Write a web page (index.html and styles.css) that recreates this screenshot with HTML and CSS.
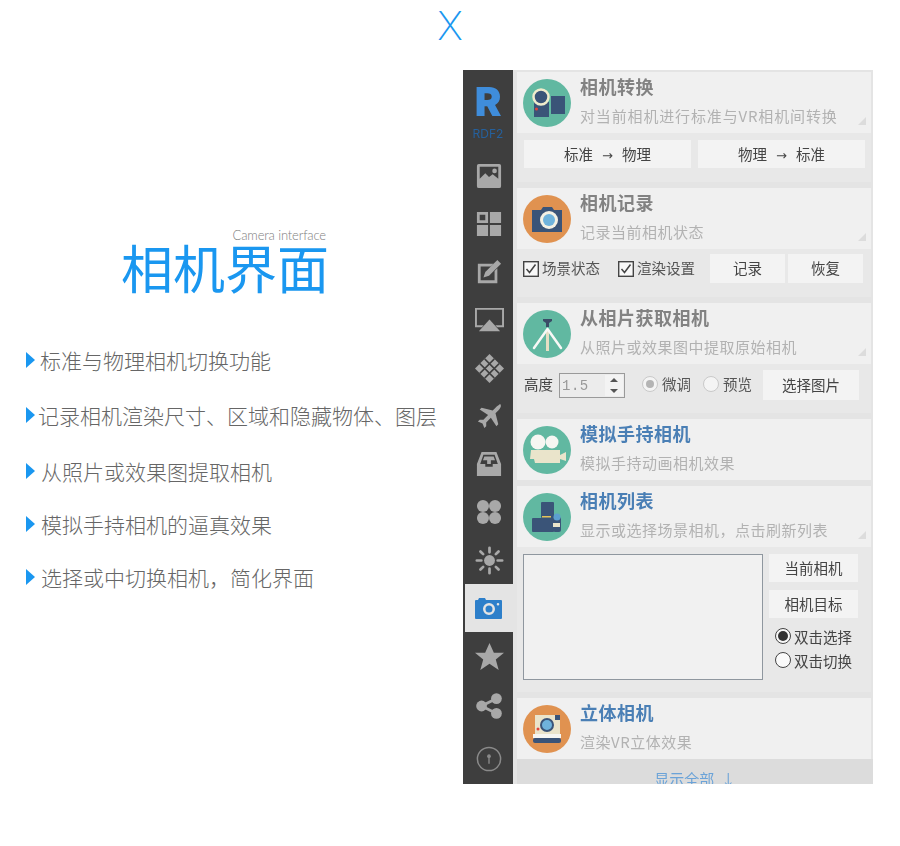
FILE: index.html
```html
<!DOCTYPE html>
<html lang="zh-CN">
<head>
<meta charset="utf-8">
<title>相机界面</title>
<link rel="stylesheet" href="styles.css">
</head>
<body>
<div class="page">
  <div class="close-mark">X</div>
  <div class="columns">
    <section class="intro">
      <div class="intro-sub">Camera interface</div>
      <h1 class="intro-title">相机界面</h1>
      <ul class="features">
        <li class="feature f1">标准与物理相机切换功能</li>
        <li class="feature f2">记录相机渲染尺寸、区域和隐藏物体、图层</li>
        <li class="feature f3">从照片或效果图提取相机</li>
        <li class="feature f4">模拟手持相机的逼真效果</li>
        <li class="feature f5">选择或中切换相机，简化界面</li>
      </ul>
    </section>

    <section class="panel">
      <nav class="rail">
        <div class="logo">R</div>
        <div class="logo-sub">RDF2</div>
        <div class="rail-item"><svg class="ri" viewBox="0 0 28 28"><path fill-rule="evenodd" d="M3 1h22a2 2 0 0 1 2 2v22a2 2 0 0 1-2 2H3a2 2 0 0 1-2-2V3a2 2 0 0 1 2-2zm1 3v13l6-6 4 4 4-3 6 5V4z"/><circle cx="20" cy="8.500" r="2.500"/></svg></div>
        <div class="rail-item"><svg class="ri" viewBox="0 0 28 28"><path fill-rule="evenodd" d="M1 1h12v12H1zM4 4v6h6V4z"/><path d="M15 1h12v12H15zM1 15h12v12H1zM15 15h12v12H15z"/></svg></div>
        <div class="rail-item"><svg class="ri" viewBox="0 0 28 28"><path fill-rule="evenodd" d="M2 5h17l-3 3H5v15h15V13l3-3v16H2z"/><path d="M8 20l2-6L23 1l4 4-13 13z"/></svg></div>
        <div class="rail-item"><svg class="ri ri-wide" viewBox="0 0 30 28"><path fill-rule="evenodd" d="M0 1h30v20h-7l-2-2h7V3H2v16h7l-2 2H0z"/><path d="M15 13l11 12H4z"/></svg></div>
        <div class="rail-item"><svg class="ri ri-wide" viewBox="0 0 30 30"><path d="M15 0l15 15-15 15L0 15z"/><path class="move-grid" d="M10 5l15 15M5 10l15 15M20 5L5 20M25 10L10 25"/></svg></div>
        <div class="rail-item"><svg class="ri" viewBox="0 0 28 28"><path d="M26 1c2 2 0 5-2 7l-3 3 3 12-2 2-6-9-5 5v4l-2 2-2-5-5-2 2-2h4l5-5-9-6 2-2 12 3 3-3c2-2 5-4 5-4z"/></svg></div>
        <div class="rail-item"><svg class="ri" viewBox="0 0 28 28"><path fill-rule="evenodd" d="M6 1h16l5 13v13H1V14zM8 4L4.500 14H10v3h8v-3h5.500L20 4z"/><path d="M9 6h10l1.500 4H16v4h-4v-4H7.500z"/></svg></div>
        <div class="rail-item"><svg class="ri" viewBox="0 0 28 28"><circle cx="7.500" cy="7.500" r="6.500"/><circle cx="20.500" cy="7.500" r="6.500"/><circle cx="7.500" cy="20.500" r="6.500"/><circle cx="20.500" cy="20.500" r="6.500"/></svg></div>
        <div class="rail-item"><svg class="ri ri-wide" viewBox="0 0 32 32"><circle cx="16" cy="16" r="6"/><g class="sun-rays"><path d="M16 2v5M16 25v5M2 16h5M25 16h5M6 6l3 3M23 23l3 3M26 6l-3 3M9 23l-3 3"/></g></svg></div>
        <div class="rail-item active"><svg class="ri ri-cam" viewBox="0 0 28 24"><path fill-rule="evenodd" d="M1 4h2l1-2h6l1 2h15a1 1 0 0 1 1 1v17a1 1 0 0 1-1 1H1a1 1 0 0 1-1-1V5a1 1 0 0 1 1-1zm13 3a6 6 0 1 0 0 12 6 6 0 0 0 0-12zm0 2.500a3.500 3.500 0 1 1 0 7 3.500 3.500 0 0 1 0-7zM23 7a1.300 1.300 0 1 0 0 2.600A1.300 1.300 0 0 0 23 7z"/></svg></div>
        <div class="rail-item"><svg class="ri ri-wide" viewBox="0 0 30 28"><path d="M15 0l4.500 10H30l-8.500 7 3 11L15 21.500 5.500 28l3-11L0 10h10.500z"/></svg></div>
        <div class="rail-item share"><svg class="ri" viewBox="0 0 28 28"><circle cx="22" cy="6" r="5.800"/><circle cx="6" cy="14" r="5.800"/><circle cx="22" cy="22" r="5.800"/><path class="share-line" d="M22 6L6 14l16 8"/></svg></div>
        <div class="rail-item info"><svg class="ri" viewBox="0 0 28 28"><circle class="info-ring" cx="14" cy="14" r="12.500"/><circle cx="14" cy="11" r="2"/><path class="share-thin" d="M14 11v8"/></svg></div>
      </nav>

      <div class="stack">
        <article class="card">
          <header class="head">
            <svg class="avatar" viewBox="0 0 48 48"><circle class="c-teal" cx="24" cy="24" r="24"/><rect class="c-navy" x="11" y="23" width="15" height="15"/><rect class="c-navy" x="28" y="17" width="14" height="18"/><circle class="c-navy l-ring" cx="18" cy="18" r="7.500"/><circle class="c-red" cx="13.500" cy="30" r="1.500"/></svg>
            <div class="head-text">
              <h2 class="title">相机转换</h2>
              <p class="sub sub-wide">对当前相机进行标准与VR相机间转换</p>
            </div>
            <i class="grip"></i>
          </header>
          <div class="body body-1">
            <button class="btn btn-half">标准<span class="arrow">→</span>物理</button>
            <button class="btn btn-half">物理<span class="arrow">→</span>标准</button>
          </div>
        </article>

        <article class="card">
          <header class="head">
            <svg class="avatar" viewBox="0 0 48 48"><circle class="c-orange" cx="24" cy="24" r="24"/><path class="c-navy" d="M9 15h9l2-3h9l2 3h8v22H9z"/><circle class="c-cream" cx="26" cy="25" r="9"/><circle class="c-blue" cx="26" cy="25" r="6"/></svg>
            <div class="head-text">
              <h2 class="title">相机记录</h2>
              <p class="sub">记录当前相机状态</p>
            </div>
            <i class="grip"></i>
          </header>
          <div class="body body-2">
            <label class="check"><svg class="box" viewBox="0 0 16 16"><rect class="box-frame" x="0.700" y="0.700" width="14.600" height="14.600"/><path class="box-tick" d="M3.500 8l3 3.500 6-8"/></svg>场景状态</label>
            <label class="check"><svg class="box" viewBox="0 0 16 16"><rect class="box-frame" x="0.700" y="0.700" width="14.600" height="14.600"/><path class="box-tick" d="M3.500 8l3 3.500 6-8"/></svg>渲染设置</label>
            <button class="btn btn-rec">记录</button>
            <button class="btn btn-rec">恢复</button>
          </div>
        </article>

        <article class="card">
          <header class="head">
            <svg class="avatar" viewBox="0 0 48 48"><circle class="c-teal" cx="24" cy="24" r="24"/><path class="c-navy2" d="M20 9h9v2l-3 2v4h-3v-4l-3-2z"/><path class="leg-c" d="M24.500 19v22"/><path class="leg-w" d="M24.500 19L11 38M24.500 19L38 38"/></svg>
            <div class="head-text">
              <h2 class="title">从相片获取相机</h2>
              <p class="sub">从照片或效果图中提取原始相机</p>
            </div>
            <i class="grip"></i>
          </header>
          <div class="body body-3">
            <span class="field-label">高度</span>
            <span class="spin"><span class="spin-val">1.5</span><span class="spin-arrows"><i class="up"></i><i class="down"></i></span></span>
            <label class="radio r-micro"><i class="dot dot-gray"></i>微调</label>
            <label class="radio r-prev"><i class="dot"></i>预览</label>
            <button class="btn btn-pick">选择图片</button>
          </div>
        </article>

        <article class="card">
          <header class="head">
            <svg class="avatar" viewBox="0 0 48 48"><circle class="c-teal" cx="24" cy="24" r="24"/><circle class="c-white" cx="15" cy="16" r="7.500"/><circle class="c-white" cx="29" cy="16" r="6.500"/><path class="c-creamy" d="M8 24h29v5l6-3v9l-6-2v4H12l-1-4H7z"/></svg>
            <div class="head-text">
              <h2 class="title title-blue">模拟手持相机</h2>
              <p class="sub">模拟手持动画相机效果</p>
            </div>
          </header>
        </article>

        <article class="card">
          <header class="head">
            <svg class="avatar" viewBox="0 0 48 48"><circle class="c-teal" cx="24" cy="24" r="24"/><rect class="c-navy" x="18" y="9" width="13" height="16" rx="1"/><rect class="c-navy" x="9" y="25" width="22" height="14" rx="1"/><rect class="c-yellow" x="19" y="23" width="9" height="1.500"/><rect class="c-navy" x="30" y="24" width="8" height="15" rx="2"/><circle class="c-blue2" cx="34" cy="24" r="3.500"/><rect class="c-creamy" x="30" y="30" width="7" height="4"/></svg>
            <div class="head-text">
              <h2 class="title title-blue">相机列表</h2>
              <p class="sub">显示或选择场景相机，点击刷新列表</p>
            </div>
            <i class="grip"></i>
          </header>
          <div class="body body-5">
            <div class="listbox"></div>
            <div class="list-side">
              <button class="btn btn-side">当前相机</button>
              <button class="btn btn-side">相机目标</button>
              <div class="radios">
                <label class="radio r-list"><i class="dot dot-dark"></i>双击选择</label>
                <label class="radio r-list"><i class="dot dot-outline"></i>双击切换</label>
              </div>
            </div>
          </div>
        </article>

        <article class="card">
          <header class="head">
            <svg class="avatar" viewBox="0 0 48 48"><circle class="c-orange" cx="24" cy="24" r="24"/><rect class="c-creamy" x="12" y="10" width="25" height="20"/><rect class="c-navy" x="32" y="10" width="5" height="5"/><circle class="c-blue l-navy" cx="24" cy="20" r="6"/><circle class="c-red" cx="15" cy="24" r="1.500"/><rect class="c-white" x="10" y="29" width="28" height="4"/><rect class="c-navy" x="10" y="33" width="28" height="5" rx="2"/></svg>
            <div class="head-text">
              <h2 class="title title-blue">立体相机</h2>
              <p class="sub">渲染VR立体效果</p>
            </div>
          </header>
        </article>

        <footer class="more">显示全部&nbsp; ↓</footer>
      </div>
    </section>
  </div>
</div>
</body>
</html>
```

FILE: styles.css
```css
* { box-sizing: border-box; }
html, body { margin: 0; padding: 0; background: #fff; }
body { font-family: "Noto Sans CJK SC", "Noto Sans", sans-serif; }
.page { width: 900px; height: 846px; overflow: hidden; }
.close-mark {
  height: 70px;
  padding-top: 3px;
  text-align: center;
  font-family: "Inter", sans-serif;
  font-weight: 200;
  font-size: 40px;
  line-height: 46px;
  color: #1a97f0;
}
.columns { display: flex; align-items: flex-start; }

/* intro column */
.intro { width: 463px; flex: none; padding-top: 157px; }
.intro-sub {
  padding-right: 137px;
  text-align: right;
  font-family: "Lato", sans-serif;
  font-weight: 300;
  font-size: 13px;
  line-height: 16px;
  color: #808080;
  letter-spacing: -0.15px;
}
.intro-title {
  margin: -2px 0 0;
  padding-left: 121px;
  font-weight: 400;
  font-size: 52px;
  line-height: 52px;
  color: #1a97f0;
  white-space: nowrap;
}
.features { list-style: none; margin: 52px 0 0; padding: 0; }
.feature {
  position: relative;
  height: 31px;
  font-size: 21px;
  line-height: 31px;
  font-weight: 300;
  color: #666;
  white-space: nowrap;
  padding-left: 41px;
}
.feature::before {
  content: "";
  position: absolute;
  left: 26px;
  top: 7px;
  border-left: 9px solid #1a97f0;
  border-top: 8px solid transparent;
  border-bottom: 8px solid transparent;
}
.f1 { padding-left: 40px; }
.f2 { padding-left: 38px; margin-top: 24px; }
.f3 { margin-top: 25px; }
.f4 { margin-top: 22px; }
.f5 { margin-top: 22px; }

/* panel */
.panel {
  width: 410px;
  height: 714px;
  display: flex;
  overflow: hidden;
  background: #e4e4e4;
  filter: blur(0.5px);
}
.rail { width: 50px; flex: none; background: #3e3e3e; display: flex; flex-direction: column; align-items: stretch; }
.logo {
  height: 52px;
  padding-top: 8px;
  text-align: center;
  font-family: "Inter", sans-serif;
  font-weight: 900;
  font-size: 40px;
  line-height: 48px;
  color: #3f8ddb;
}
.logo-sub {
  height: 30px;
  text-align: center;
  font-family: "Inter", sans-serif;
  font-size: 12px;
  line-height: 24px;
  color: #25609c;
}
.rail-item { height: 48px; flex: none; display: flex; align-items: center; justify-content: center; margin-left: 2px; }
.rail-item.share { padding-top: 4px; }
.rail-item.info { margin-top: 7px; }
.rail-item.active { background: #e4e4e4; }
.ri { width: 26px; height: 26px; fill: #a8a8a8; }
.ri-wide { width: 29px; height: 29px; }
.ri-cam { width: 28px; height: 24px; fill: #2d7fca; }
.move-grid { fill: none; stroke: #3e3e3e; stroke-width: 1.600; }
.sun-rays path { fill: none; stroke: #a8a8a8; stroke-width: 3; stroke-linecap: round; }
.share-line { fill: none; stroke: #a8a8a8; stroke-width: 3; }
.share-thin { fill: none; stroke: #8a8a8a; stroke-width: 1.500; }
.info-ring { fill: none; stroke: #8a8a8a; stroke-width: 1.600; }
.rail-item.info circle:not(.info-ring) { fill: #8a8a8a; }

/* stack of cards */
.stack { flex: 1; min-width: 0; padding: 2px 2px 0 4px; display: flex; flex-direction: column; }
.card { flex: none; margin-bottom: 6px; }
.head {
  position: relative;
  height: 61px;
  padding: 7px 0 0 6px;
  display: flex;
  gap: 9px;
  background: #f0f0f0;
}
.avatar { width: 48px; height: 48px; flex: none; }
.head-text { min-width: 0; }
.title {
  margin: -5px 0 0;
  font-size: 18px;
  line-height: 24px;
  font-weight: 700;
  color: #828282;
  letter-spacing: 0.5px;
  white-space: nowrap;
}
.title-blue { color: #4a7fb5; }
.sub {
  margin: 7px 0 0;
  font-size: 15px;
  line-height: 22px;
  font-weight: 400;
  color: #b2b2b2;
  letter-spacing: 0.5px;
  white-space: nowrap;
}
.sub-wide { letter-spacing: 0.85px; }
.grip {
  position: absolute;
  right: 5px;
  bottom: 8px;
  border-left: 8px solid transparent;
  border-bottom: 8px solid #dcdcdc;
}
.c-teal { fill: #61b8a1; }
.c-orange { fill: #e09250; }
.c-navy { fill: #3a5478; }
.c-navy2 { fill: #3a4c66; }
.c-red { fill: #e2453c; }
.c-cream { fill: #f4f1e4; }
.c-creamy { fill: #eae4cb; }
.c-white { fill: #f6f6f2; }
.c-blue { fill: #6fb3dc; }
.c-blue2 { fill: #5c9fd0; }
.c-yellow { fill: #e6c35a; }
.l-ring { stroke: #f0eccc; stroke-width: 2.500; }
.l-navy { stroke: #3a5478; stroke-width: 2; }
.leg-c { fill: none; stroke: #e6dfc4; stroke-width: 3; }
.leg-w { fill: none; stroke: #f8f8f6; stroke-width: 2.500; stroke-linecap: round; }

/* bodies */
.body { background: #e8e8e8; display: flex; }
.btn {
  border: 0;
  padding: 0 0 2px;
  background: #f3f3f3;
  font: inherit;
  font-size: 14.500px;
  color: #444;
  cursor: default;
}
.body-1 { height: 49px; padding: 7px 0 0 7px; gap: 7px; align-items: flex-start; }
.btn-half { width: 167px; height: 28px; }
.arrow { font-family: "DejaVu Sans", sans-serif; font-size: 13px; margin: 0 9px; }
.body-2 { height: 48px; padding: 5px 0 0 6px; align-items: flex-start; }
.check { display: flex; align-items: center; gap: 3px; height: 27px; font-size: 14.500px; color: #555; margin-right: 18px; white-space: nowrap; }
.check + .check { margin-right: 15px; }
.box { width: 16px; height: 16px; flex: none; margin-top: 2px; }
.box-frame { fill: #f8f8f8; stroke: #444; stroke-width: 1.400; }
.box-tick { fill: none; stroke: #444; stroke-width: 1.500; }
.btn-rec { width: 75px; height: 29px; margin-right: 3px; }
.body-3 { height: 49px; padding: 6px 0 0 7px; align-items: flex-start; }
.field-label { font-size: 14.500px; line-height: 27px; color: #444; margin-right: 6px; white-space: nowrap; }
.spin {
  width: 66px;
  height: 25px;
  margin-top: 3px;
  border: 1px solid #9a9a9a;
  background: #ececec;
  display: flex;
  align-items: center;
  justify-content: space-between;
  padding: 0 1px 0 2px;
}
.spin-val { font-family: "Liberation Mono", monospace; font-size: 14px; color: #999; letter-spacing: 0.5px; }
.spin-arrows { width: 18px; height: 21px; display: flex; flex-direction: column; align-items: center; justify-content: space-around; background: #f3f3f3; }
.up, .down { width: 0; height: 0; border-left: 4px solid transparent; border-right: 4px solid transparent; }
.up { border-bottom: 4px solid #555; }
.down { border-top: 4px solid #555; }
.radio { display: flex; align-items: center; gap: 4px; font-size: 14.500px; color: #555; white-space: nowrap; }
.dot {
  width: 16px;
  height: 16px;
  flex: none;
  border-radius: 50%;
  background: #f4f4f4;
  border: 1px solid #c9c9c9;
  position: relative;
}
.dot-gray::after, .dot-dark::after {
  content: "";
  position: absolute;
  inset: 3px;
  border-radius: 50%;
  background: #b4b4b4;
}
.dot-dark { border: 1.500px solid #444; background: #f8f8f8; }
.dot-dark::after { background: #333; inset: 2px; }
.dot-outline { border: 1.500px solid #444; background: #fafafa; }
.r-micro { height: 27px; margin-left: 17px; }
.r-prev { height: 27px; margin-left: 12px; }
.btn-pick { width: 96px; height: 30px; margin-left: 11px; }
.body-5 { height: 145px; padding: 7px 0 0 6px; }
.listbox { width: 240px; height: 126px; flex: none; background: #f1f1f1; border: 1px solid #8f979f; }
.list-side { margin-left: 6px; width: 89px; display: flex; flex-direction: column; gap: 8px; }
.btn-side { height: 28px; }
.radios { margin: -1px 0 0 6px; display: flex; flex-direction: column; gap: 2px; }
.r-list { height: 22px; gap: 3px; color: #444; }
.more {
  margin: -6px -2px 0 0;
  height: 30px;
  background: #dcdcdc;
  text-align: center;
  font-size: 15px;
  line-height: 40px;
  color: #6ba3d8;
}
```
